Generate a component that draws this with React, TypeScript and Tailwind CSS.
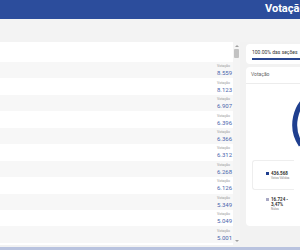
const rows = ["8.559", "8.123", "6.907", "6.396", "6.366", "6.312", "6.268", "6.126", "5.349", "5.049", "5.001"];

function Scrollbar() {
  return (
    <div className="flex w-[7px] flex-col items-center bg-[#f4f4f4]">
      <span className="mt-[3px] h-0 w-0 border-x-[2px] border-b-[2px] border-x-transparent border-b-[#a0a0a0]" />
      <span className="mt-[2px] h-[9px] w-[5px] rounded-[1px] bg-[#c2c2c2]" />
      <span className="flex-1" />
      <span className="mb-[3px] h-0 w-0 border-x-[2px] border-t-[2px] border-x-transparent border-t-[#a0a0a0]" />
    </div>
  );
}

// left edge of the pie chart, the rest lies past the window
function Donut() {
  return (
    <svg width="54" height="60" viewBox="0 0 54 60" className="ml-auto">
      <path d="M66 -1 A36 36 0 0 0 55 50" fill="none" stroke="#1f3f8f" strokeWidth="5" />
    </svg>
  );
}

export default function App() {
  return (
    <div className="flex h-[250px] w-[300px] flex-col overflow-hidden bg-[#f2f2f2] font-['Roboto','Open_Sans',sans-serif]">
      <header className="flex h-[19px] shrink-0 items-center bg-[#2c4d9c] pl-[265px]">
        <span className="whitespace-nowrap text-[11px] font-bold text-white">Votação</span>
      </header>
      <div className="h-[23px] shrink-0 bg-[#f3f3f3]" />

      <div className="flex min-h-0 flex-1 gap-[6px]">
        <section className="flex w-[240px] shrink-0 rounded-tr-[4px] bg-white">
          <div className="flex flex-1 flex-col">
            <div className="h-[20px] shrink-0" />
            {rows.map((v, i) => (
              <div
                key={v}
                className={`flex h-[16.45px] shrink-0 flex-col items-end justify-center pr-[3px] ${i % 2 === 0 ? "bg-[#f7f7f7]" : "bg-white"}`}
              >
                <span className="w-[13px] text-[3.5px] leading-[5px] text-[#9a9a9a]">Votação</span>
                <span className="w-[13px] text-[6px] leading-[7px] text-[#4a66ad]">{v}</span>
              </div>
            ))}
          </div>
          <Scrollbar />
        </section>

        <aside className="flex min-w-0 flex-1 flex-col gap-[3px] pt-[2px]">
          <div className="flex h-[20px] flex-col justify-center gap-[3px] rounded-l-[4px] bg-white pl-[6px]">
            <span className="whitespace-nowrap text-[5px] leading-[6px] text-[#333]">100.00% das seções</span>
            <span className="h-[2px] bg-[#2a4790]" />
          </div>
          <div className="flex h-[159px] flex-col rounded-l-[4px] bg-white">
            <div className="flex h-[17px] items-center border-b border-[#ececec] pl-[5px]">
              <span className="text-[5px] text-[#666]">Votação</span>
            </div>
            <div className="h-[11px]" />
            <Donut />
            <div className="mx-[6px] mt-[5px] flex h-[30px] flex-col justify-center rounded-l-[3px] border border-r-0 border-[#eeeeee] pl-[13px]">
              <div className="flex items-center gap-[2px]">
                <span className="h-[3px] w-[3px] bg-[#1f3f8f]" />
                <span className="text-[4.5px] font-bold leading-[5px] text-[#333]">436.568</span>
              </div>
              <span className="pl-[5px] text-[3px] leading-[4px] text-[#888]">Votos Válidos</span>
            </div>
            <div className="mt-[7px] flex flex-col pl-[20px]">
              <div className="flex items-center gap-[2px]">
                <span className="h-[3px] w-[3px] bg-[#a9a9c4]" />
                <span className="whitespace-nowrap text-[4.5px] font-bold leading-[5px] text-[#333]">16.724 -</span>
              </div>
              <span className="pl-[5px] text-[4.5px] font-bold leading-[5px] text-[#333]">3,47%</span>
              <span className="pl-[5px] text-[3px] leading-[4px] text-[#888]">Nulos</span>
            </div>
          </div>
        </aside>
      </div>

      <div className="h-[2px] shrink-0 bg-[#f2f2f2]" />
      <div className="h-[3px] shrink-0 bg-[#b9c3df]" />
    </div>
  );
}
